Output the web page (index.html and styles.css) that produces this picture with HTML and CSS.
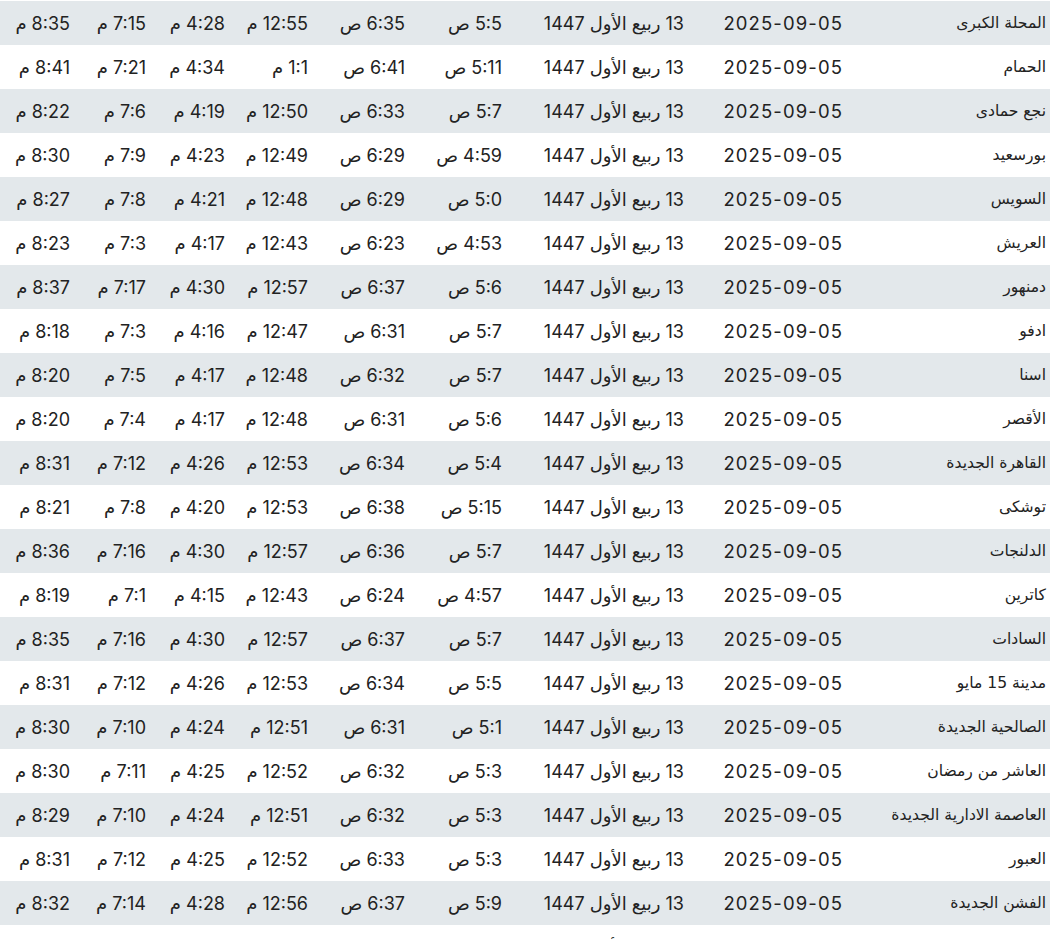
FILE: index.html
```html
<!DOCTYPE html>
<html lang="ar" dir="rtl">
<head>
<meta charset="utf-8">
<title>مواقيت الصلاة</title>
<link rel="stylesheet" href="styles.css">
</head>
<body>
<div class="wrap">
<table class="times">
<colgroup>
<col class="c-city"><col class="c-date"><col class="c-hijri"><col class="c-fajr"><col class="c-sun"><col class="c-dhuhr"><col class="c-asr"><col class="c-maghrib"><col class="c-isha">
</colgroup>
<tbody>
<tr><td class="city">المحلة الكبرى</td><td class="date">2025-09-05</td><td>13 ربيع الأول 1447</td><td>5:5 ص</td><td>6:35 ص</td><td>12:55 م</td><td>4:28 م</td><td>7:15 م</td><td>8:35 م</td></tr>
<tr><td class="city">الحمام</td><td class="date">2025-09-05</td><td>13 ربيع الأول 1447</td><td>5:11 ص</td><td>6:41 ص</td><td>1:1 م</td><td>4:34 م</td><td>7:21 م</td><td>8:41 م</td></tr>
<tr><td class="city">نجع حمادى</td><td class="date">2025-09-05</td><td>13 ربيع الأول 1447</td><td>5:7 ص</td><td>6:33 ص</td><td>12:50 م</td><td>4:19 م</td><td>7:6 م</td><td>8:22 م</td></tr>
<tr><td class="city">بورسعيد</td><td class="date">2025-09-05</td><td>13 ربيع الأول 1447</td><td>4:59 ص</td><td>6:29 ص</td><td>12:49 م</td><td>4:23 م</td><td>7:9 م</td><td>8:30 م</td></tr>
<tr><td class="city">السويس</td><td class="date">2025-09-05</td><td>13 ربيع الأول 1447</td><td>5:0 ص</td><td>6:29 ص</td><td>12:48 م</td><td>4:21 م</td><td>7:8 م</td><td>8:27 م</td></tr>
<tr><td class="city">العريش</td><td class="date">2025-09-05</td><td>13 ربيع الأول 1447</td><td>4:53 ص</td><td>6:23 ص</td><td>12:43 م</td><td>4:17 م</td><td>7:3 م</td><td>8:23 م</td></tr>
<tr><td class="city">دمنهور</td><td class="date">2025-09-05</td><td>13 ربيع الأول 1447</td><td>5:6 ص</td><td>6:37 ص</td><td>12:57 م</td><td>4:30 م</td><td>7:17 م</td><td>8:37 م</td></tr>
<tr><td class="city">ادفو</td><td class="date">2025-09-05</td><td>13 ربيع الأول 1447</td><td>5:7 ص</td><td>6:31 ص</td><td>12:47 م</td><td>4:16 م</td><td>7:3 م</td><td>8:18 م</td></tr>
<tr><td class="city">اسنا</td><td class="date">2025-09-05</td><td>13 ربيع الأول 1447</td><td>5:7 ص</td><td>6:32 ص</td><td>12:48 م</td><td>4:17 م</td><td>7:5 م</td><td>8:20 م</td></tr>
<tr><td class="city">الأقصر</td><td class="date">2025-09-05</td><td>13 ربيع الأول 1447</td><td>5:6 ص</td><td>6:31 ص</td><td>12:48 م</td><td>4:17 م</td><td>7:4 م</td><td>8:20 م</td></tr>
<tr><td class="city">القاهرة الجديدة</td><td class="date">2025-09-05</td><td>13 ربيع الأول 1447</td><td>5:4 ص</td><td>6:34 ص</td><td>12:53 م</td><td>4:26 م</td><td>7:12 م</td><td>8:31 م</td></tr>
<tr><td class="city">توشكى</td><td class="date">2025-09-05</td><td>13 ربيع الأول 1447</td><td>5:15 ص</td><td>6:38 ص</td><td>12:53 م</td><td>4:20 م</td><td>7:8 م</td><td>8:21 م</td></tr>
<tr><td class="city">الدلنجات</td><td class="date">2025-09-05</td><td>13 ربيع الأول 1447</td><td>5:7 ص</td><td>6:36 ص</td><td>12:57 م</td><td>4:30 م</td><td>7:16 م</td><td>8:36 م</td></tr>
<tr><td class="city">كاترين</td><td class="date">2025-09-05</td><td>13 ربيع الأول 1447</td><td>4:57 ص</td><td>6:24 ص</td><td>12:43 م</td><td>4:15 م</td><td>7:1 م</td><td>8:19 م</td></tr>
<tr><td class="city">السادات</td><td class="date">2025-09-05</td><td>13 ربيع الأول 1447</td><td>5:7 ص</td><td>6:37 ص</td><td>12:57 م</td><td>4:30 م</td><td>7:16 م</td><td>8:35 م</td></tr>
<tr><td class="city">مدينة 15 مايو</td><td class="date">2025-09-05</td><td>13 ربيع الأول 1447</td><td>5:5 ص</td><td>6:34 ص</td><td>12:53 م</td><td>4:26 م</td><td>7:12 م</td><td>8:31 م</td></tr>
<tr><td class="city">الصالحية الجديدة</td><td class="date">2025-09-05</td><td>13 ربيع الأول 1447</td><td>5:1 ص</td><td>6:31 ص</td><td>12:51 م</td><td>4:24 م</td><td>7:10 م</td><td>8:30 م</td></tr>
<tr><td class="city">العاشر من رمضان</td><td class="date">2025-09-05</td><td>13 ربيع الأول 1447</td><td>5:3 ص</td><td>6:32 ص</td><td>12:52 م</td><td>4:25 م</td><td>7:11 م</td><td>8:30 م</td></tr>
<tr><td class="city">العاصمة الادارية الجديدة</td><td class="date">2025-09-05</td><td>13 ربيع الأول 1447</td><td>5:3 ص</td><td>6:32 ص</td><td>12:51 م</td><td>4:24 م</td><td>7:10 م</td><td>8:29 م</td></tr>
<tr><td class="city">العبور</td><td class="date">2025-09-05</td><td>13 ربيع الأول 1447</td><td>5:3 ص</td><td>6:33 ص</td><td>12:52 م</td><td>4:25 م</td><td>7:12 م</td><td>8:31 م</td></tr>
<tr><td class="city">الفشن الجديدة</td><td class="date">2025-09-05</td><td>13 ربيع الأول 1447</td><td>5:9 ص</td><td>6:37 ص</td><td>12:56 م</td><td>4:28 م</td><td>7:14 م</td><td>8:32 م</td></tr>
<tr><td class="city">الشروق</td><td class="date">2025-09-05</td><td>13 ربيع الأول 1447</td><td>5:3 ص</td><td>6:33 ص</td><td>12:52 م</td><td>4:25 م</td><td>7:11 م</td><td>8:30 م</td></tr>
</tbody>
</table>
</div>
</body>
</html>
```

FILE: styles.css
```css
html, body {
  margin: 0;
  padding: 0;
  background: #ffffff;
}
body {
  font-family: "Inter", "DejaVu Sans", sans-serif;
  color: #222222;
  overflow: hidden;
}
.wrap {
  width: 1050px;
  margin-left: 0;
  margin-right: auto;
  padding-top: 1px;
}
.times {
  width: 1050px;
  border-collapse: collapse;
  table-layout: fixed;
}
.c-city { width: 203px; }
.c-date { width: 159px; }
.c-hijri { width: 182px; }
.c-fajr { width: 97px; }
.c-sun { width: 97px; }
.c-dhuhr { width: 83px; }
.c-asr { width: 79px; }
.c-maghrib { width: 76px; }
.c-isha { width: 74px; }
.times td {
  height: 44px;
  padding: 0 4px 0 0;
  text-align: right;
  vertical-align: middle;
  font-size: 18px;
  white-space: nowrap;
  box-sizing: border-box;
}
.times tr:nth-child(odd) td {
  background: #e3e8eb;
}
.times td.city {
  font-family: "DejaVu Sans", sans-serif;
  font-size: 15.6px;
}
.times td.date {
  font-size: 18.5px;
  letter-spacing: 1.1px;
}
```
